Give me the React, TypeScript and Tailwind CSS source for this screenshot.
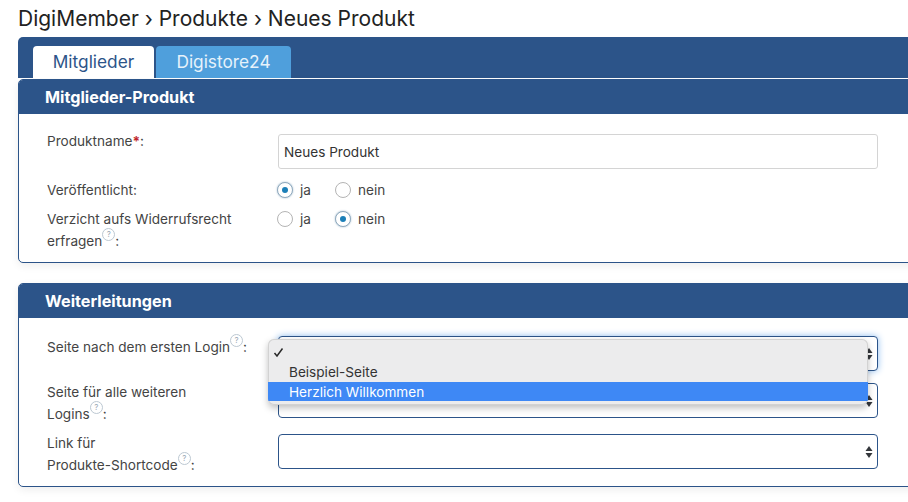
function Help() {
  return (
    <span className="relative -top-[9px] inline-flex h-[13px] w-[13px] items-center justify-center rounded-full border border-[#bcc8d2] text-[8px] leading-none text-[#9aa8b4]">
      ?
    </span>
  )
}

function Radio({ checked, label }: { checked?: boolean; label: string }) {
  return (
    <div className="flex items-center gap-[7px]">
      <span
        className={
          "flex h-[16px] w-[16px] items-center justify-center rounded-full border bg-white " +
          (checked ? "border-[#8fa9bd] shadow-[0_0_2px_#9fb8cc]" : "border-[#b4b4b4]")
        }
      >
        {checked && <span className="h-[6px] w-[6px] rounded-full bg-[#1c7fb8]" />}
      </span>
      <span>{label}</span>
    </div>
  )
}

function RadioPair({ value }: { value: "ja" | "nein" }) {
  return (
    <div className="-ml-[1px] flex h-[22px] items-center">
      <div className="w-[58px]">
        <Radio checked={value === "ja"} label="ja" />
      </div>
      <Radio checked={value === "nein"} label="nein" />
    </div>
  )
}

function Select({ focused, className }: { focused?: boolean; className?: string }) {
  return (
    <div
      className={
        "flex h-[35px] w-[600px] items-center justify-end rounded-[4px] border border-[#2c5489] bg-white pr-[4px] " +
        (focused ? "shadow-[0_0_7px_#8dbdf0] " : "") +
        (className ?? "")
      }
    >
      <svg width="8" height="14" viewBox="0 0 8 14" fill="#33363b">
        <path d="M4 1 L7.5 6 H0.5 Z" />
        <path d="M4 13 L7.5 8 H0.5 Z" />
      </svg>
    </div>
  )
}

function Card({ title, children, className }: { title: string; children: React.ReactNode; className?: string }) {
  return (
    <section
      className={
        "w-[930px] overflow-hidden rounded-[5px] border border-[#2c5489] bg-white shadow-[0_3px_8px_rgba(0,0,0,0.07)] " +
        (className ?? "")
      }
    >
      <h2 className="flex h-[34px] items-center bg-[#2c5489] pl-[26px] text-[16.2px] font-bold text-white">{title}</h2>
      {children}
    </section>
  )
}

export default function App() {
  return (
    <div className="relative h-[502px] w-[908px] overflow-hidden bg-white font-['Inter',sans-serif] text-[13.6px] leading-[22px] text-[#444]">
      <h1 className="ml-[18px] flex h-[37px] items-center text-[21px] font-normal text-[#222]">
        DigiMember › Produkte › Neues Produkt
      </h1>

      <div className="ml-[18px] w-[930px]">
        <div className="flex h-[42px] items-end gap-[2px] rounded-t-[5px] border-b border-white bg-[#2c5489] pl-[15px]">
          <div className="flex h-[32px] w-[121px] items-center justify-center rounded-t-[4px] bg-white text-[17.3px] text-[#2c5489]">
            Mitglieder
          </div>
          <div className="flex h-[32px] w-[135px] items-center justify-center rounded-t-[4px] bg-[#4f9fdc] text-[17.3px] text-[#e6f2fb]">
            Digistore24
          </div>
        </div>

        <Card title="Mitglieder-Produkt">
          <div className="flex flex-col px-[28px] pb-[10px] pt-[16px]">
            <div className="grid grid-cols-[231px_1fr]">
              <div>
                Produktname<span className="font-bold text-[#c0272d]">*</span>:
              </div>
              <div className="mt-[4px] flex h-[35px] w-[600px] items-center rounded-[3px] border border-[#d4d4d4] bg-white pl-[5px] text-[#333]">
                Neues Produkt
              </div>
            </div>
            <div className="mt-[10px] grid grid-cols-[231px_1fr]">
              <div>Veröffentlicht:</div>
              <RadioPair value="ja" />
            </div>
            <div className="mt-[7px] grid grid-cols-[231px_1fr]">
              <div>
                Verzicht aufs Widerrufsrecht
                <br />
                erfragen
                <Help />:
              </div>
              <RadioPair value="nein" />
            </div>
          </div>
        </Card>

        <Card title="Weiterleitungen" className="mt-[20px]">
          <div className="flex flex-col px-[28px] pb-[10px] pt-[18px]">
            <div className="grid grid-cols-[231px_1fr]">
              <div>
                Seite nach dem ersten Login
                <Help />:
              </div>
              <Select focused />
            </div>
            <div className="mt-[10px] grid grid-cols-[231px_1fr]">
              <div>
                Seite für alle weiteren
                <br />
                Logins
                <Help />:
              </div>
              <Select className="mt-[2px]" />
            </div>
            <div className="mt-[7px] grid grid-cols-[231px_1fr]">
              <div>
                Link für
                <br />
                Produkte-Shortcode
                <Help />:
              </div>
              <Select className="mt-[2px]" />
            </div>
          </div>
        </Card>
      </div>

      {/* open dropdown over the first two selects */}
      <div className="absolute left-[268px] top-[339px] h-[66px] w-[600px] overflow-hidden rounded-[6px] bg-[#ececed] pt-[1px] shadow-[inset_0_0_0_1px_#d2d2d2,0_3px_7px_rgba(0,0,0,0.25)]">
        <div className="flex h-[22px] items-center pl-[5px] pt-[3px]">
          <svg width="11" height="11" viewBox="0 0 11 11" fill="none" stroke="#2a2a2a" strokeWidth="1.5">
            <path d="M1.5 6 L4 9 L9.5 1.5" />
          </svg>
        </div>
        <div className="flex h-[20px] items-center pl-[21px] text-[#333]">Beispiel-Seite</div>
        <div className="flex h-[19px] items-center bg-[#3e88f5] pl-[21px] text-white">Herzlich Willkommen</div>
      </div>
    </div>
  )
}
